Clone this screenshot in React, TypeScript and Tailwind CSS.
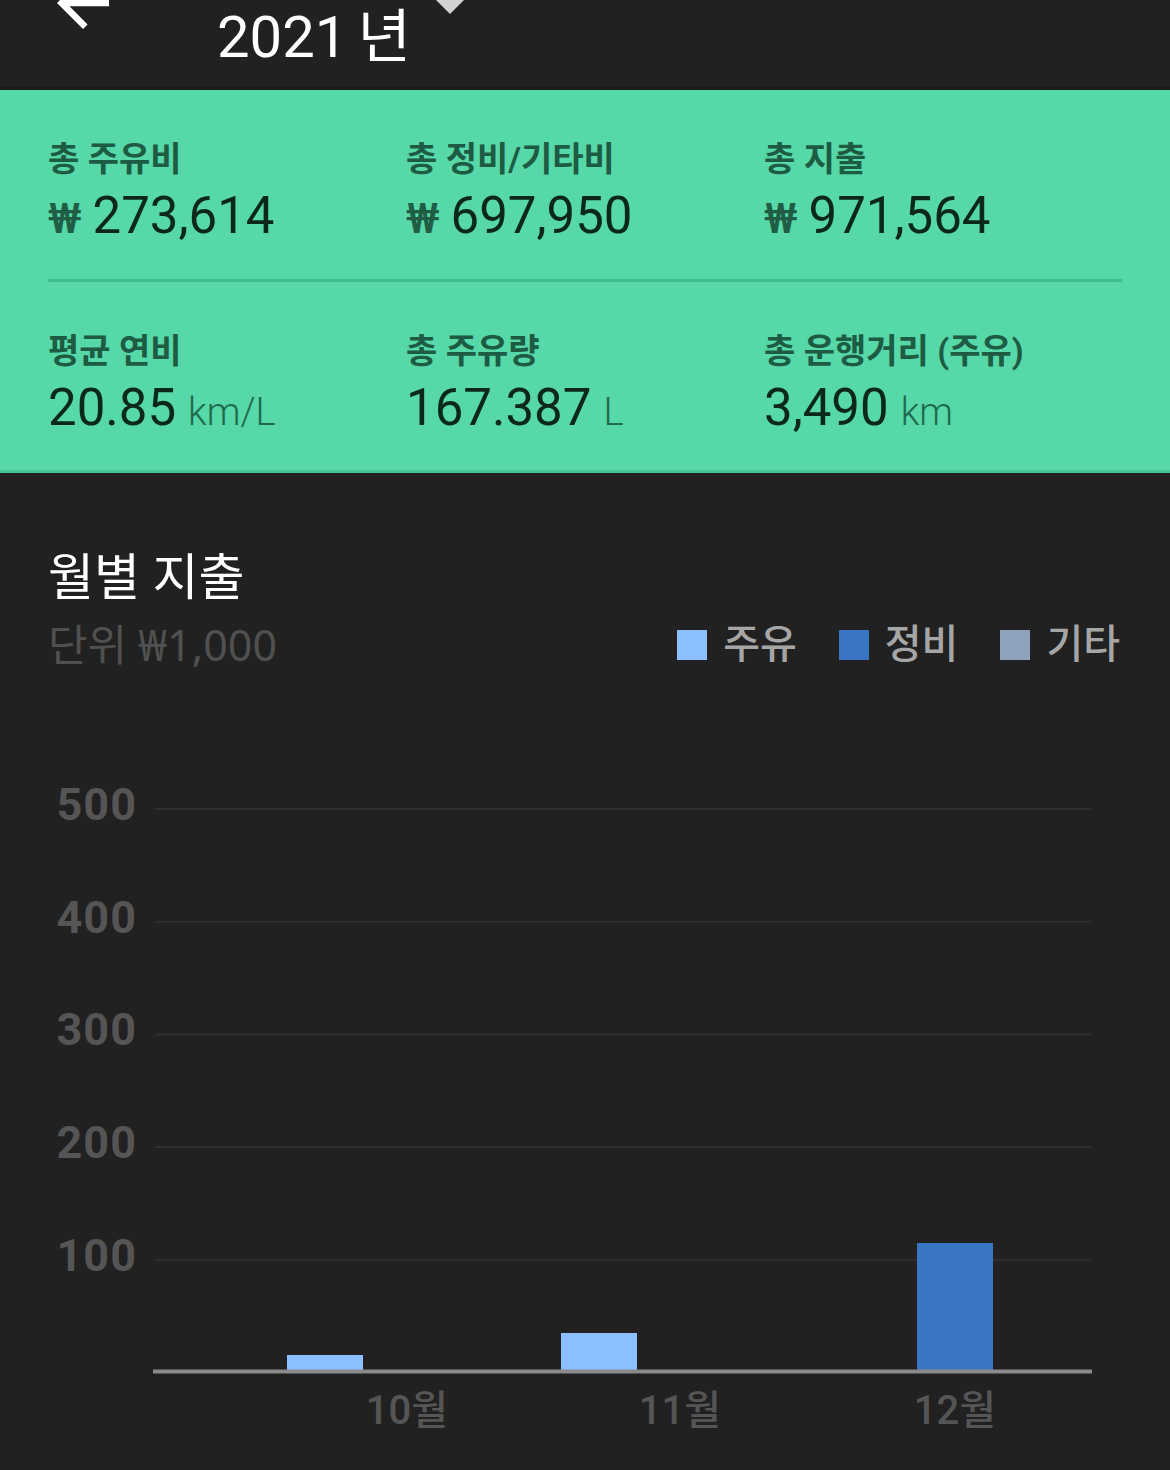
import React from "react";

type StatProps = { label: string; won?: boolean; value: string; unit?: string };

function Stat({ label, won, value, unit }: StatProps) {
  return (
    <div>
      <div className="text-[34px] leading-[40px] font-bold text-[#1d5b43] whitespace-nowrap">{label}</div>
      <div className="mt-[7px] h-[60px] leading-[60px] flex items-baseline whitespace-nowrap">
        {won && <span className="text-[43px] font-medium text-[#1f5d45] mr-[11px]">₩</span>}
        <span className="text-[51px] text-[#0c271b]">{value}</span>
        {unit && <span className="ml-[12px] text-[38px] font-light text-[#1f6a4c]">{unit}</span>}
      </div>
    </div>
  );
}

function LegendItem({ color, label }: { color: string; label: string }) {
  return (
    <div className="flex items-center">
      <div className="w-[30px] h-[30px]" style={{ backgroundColor: color }} />
      <span className="ml-[16px] text-[40px] leading-[48px] font-medium text-[#a6a6a6]">{label}</span>
    </div>
  );
}

export default function App() {
  const grid = [
    { v: "500", y: 809 },
    { v: "400", y: 921.7 },
    { v: "300", y: 1034.4 },
    { v: "200", y: 1147 },
    { v: "100", y: 1259.7 },
  ];
  const base = 1371.5;
  const bars = [
    { x: 287, top: 1355, c: "#8bbfff" },
    { x: 561, top: 1333, c: "#8bbfff" },
    { x: 917, top: 1243, c: "#3a75c4" },
  ];
  const months = [
    { t: "10월", x: 407 },
    { t: "11월", x: 680 },
    { t: "12월", x: 955 },
  ];
  return (
    <div className="w-[1170px] h-[1470px] overflow-hidden bg-[#212121] font-['Roboto','Noto_Sans_CJK_KR',sans-serif]">
      {/* Header */}
      <div className="h-[87px] flex items-start overflow-hidden bg-[#212121]">
        <svg className="ml-[44px] mt-[-36px] shrink-0" width="78" height="78" viewBox="0 0 24 24">
          <path fill="#ffffff" d="M20 11H7.83l5.59-5.59L12 4l-8 8 8 8 1.41-1.41L7.83 13H20v-2z" />
        </svg>
        <span className="ml-[95px] mt-[3px] w-[219px] shrink-0 text-[58px] leading-[68px] text-white whitespace-nowrap">
          2021<span className="ml-[10px]">년</span>
        </span>
        <svg className="shrink-0" width="28" height="14" viewBox="0 0 28 14">
          <polygon points="0,0 28,0 14,14" fill="#d2d2d2" />
        </svg>
      </div>
      <div className="h-[3px] bg-[#191919]" />

      {/* Summary panel */}
      <div className="bg-[#56d8a8] border-b-[3px] border-[#46c494] px-[48px] pt-[49px] pb-[32px]">
        <div className="grid grid-cols-3">
          <Stat label="총 주유비" won value="273,614" />
          <Stat label="총 정비/기타비" won value="697,950" />
          <Stat label="총 지출" won value="971,564" />
        </div>
        <div className="mt-[33px] h-[3px] bg-[#3fbd8a]" />
        <div className="grid grid-cols-3 mt-[49px]">
          <Stat label="평균 연비" value="20.85" unit="km/L" />
          <Stat label="총 주유량" value="167.387" unit="L" />
          <Stat label="총 운행거리 (주유)" value="3,490" unit="km" />
        </div>
      </div>

      {/* Monthly expense */}
      <div className="px-[48px] pr-[50px]">
        <div className="mt-[76px] text-[50px] leading-[58px] text-white">월별 지출</div>
        <div className="mt-[14px] flex items-center justify-between h-[48px]">
          <span className="text-[43px] leading-[48px] text-[#505050] font-['Noto_Sans','Noto_Sans_CJK_KR',sans-serif]">
            단위 ₩1,000
          </span>
          <div className="flex items-center gap-[42px]">
            <LegendItem color="#8bbfff" label="주유" />
            <LegendItem color="#3a75c4" label="정비" />
            <LegendItem color="#8fa2bc" label="기타" />
          </div>
        </div>
      </div>

      <svg width="1170" height="801" viewBox="0 669 1170 801" className="block">
        {grid.map((g) => (
          <g key={g.v}>
            <line x1="155" x2="1091" y1={g.y} y2={g.y} stroke="#2f2f2f" strokeWidth="2" />
            <text
              x="137"
              y={g.y + 11}
              textAnchor="end"
              fontSize="45"
              fontWeight="700"
              fill="#555555"
              letterSpacing="1"
              fontFamily="Roboto, 'Noto Sans CJK KR', sans-serif"
            >
              {g.v}
            </text>
          </g>
        ))}
        {bars.map((b, i) => (
          <rect key={i} x={b.x} y={b.top} width="76" height={base - b.top} fill={b.c} />
        ))}
        <line x1="153" x2="1092" y1={base} y2={base} stroke="#8a8a8a" strokeWidth="4" />
        {months.map((m) => (
          <text
            key={m.t}
            x={m.x}
            y="1424"
            textAnchor="middle"
            fontSize="40"
            fontWeight="500"
            fill="#555555"
            fontFamily="Roboto, 'Noto Sans CJK KR', sans-serif"
          >
            {m.t}
          </text>
        ))}
      </svg>
    </div>
  );
}
